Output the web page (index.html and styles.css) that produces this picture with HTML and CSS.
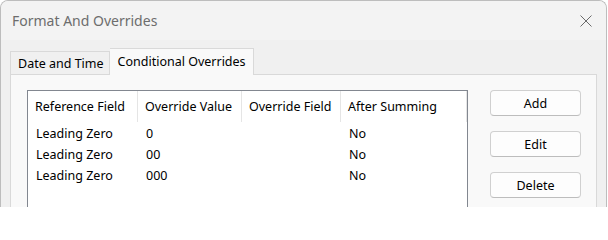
FILE: index.html
```html
<!DOCTYPE html>
<html>
<head>
<meta charset="utf-8">
<link rel="stylesheet" href="styles.css">
</head>
<body>
<div class="window">
  <div class="titlebar">
    <span class="title">Format And Overrides</span>
    <svg class="close" width="12" height="12" viewBox="0 0 12 12"><path d="M0.5 0.5 L11.5 11.5 M11.5 0.5 L0.5 11.5" stroke="#6a6a6a" stroke-width="1" fill="none"/></svg>
  </div>
  <div class="content">
    <div class="tabs">
      <div class="tab">Date and Time</div>
      <div class="tab active">Conditional Overrides</div>
    </div>
    <div class="panel">
      <div class="list">
        <div class="row header">
          <div class="cell c1">Reference Field</div>
          <div class="cell c2">Override Value</div>
          <div class="cell c3">Override Field</div>
          <div class="cell c4">After Summing</div>
        </div>
        <div class="row">
          <div class="cell c1">Leading Zero</div>
          <div class="cell c2">0</div>
          <div class="cell c3"></div>
          <div class="cell c4">No</div>
        </div>
        <div class="row">
          <div class="cell c1">Leading Zero</div>
          <div class="cell c2">00</div>
          <div class="cell c3"></div>
          <div class="cell c4">No</div>
        </div>
        <div class="row">
          <div class="cell c1">Leading Zero</div>
          <div class="cell c2">000</div>
          <div class="cell c3"></div>
          <div class="cell c4">No</div>
        </div>
      </div>
      <div class="buttons">
        <button class="btn">Add</button>
        <button class="btn">Edit</button>
        <button class="btn">Delete</button>
      </div>
    </div>
  </div>
</div>
</body>
</html>
```
FILE: styles.css
```css
* { box-sizing: border-box; }
html, body { margin: 0; padding: 0; background: #ffffff; }
body {
  width: 608px;
  height: 207px;
  overflow: hidden;
  font-family: "Noto Sans", "Open Sans", sans-serif;
  font-size: 12.5px;
  color: #000;
}
.window {
  width: 607px;
  height: 207px;
  border: 1px solid #bdbdbd;
  border-bottom: none;
  border-radius: 8px 8px 0 0;
  background: #f0f0f0;
  display: flex;
  flex-direction: column;
  overflow: hidden;
}
.titlebar {
  height: 39px;
  flex: none;
  display: flex;
  align-items: center;
  justify-content: space-between;
  padding: 0 14px 0 11px;
  background: #f3f3f3;
}
.title {
  font-size: 14px;
  color: #6d6d6d;
}
.close { display: block; }
.content {
  flex: 1;
  display: flex;
  flex-direction: column;
  padding: 0 9px 0 9px;
}
.tabs {
  height: 34px;
  flex: none;
  display: flex;
  align-items: flex-end;
}
.tab {
  height: 23px;
  padding: 0 5px 0 7px;
  display: flex;
  align-items: center;
  border: 1px solid #d9d9d9;
  border-bottom: none;
  background: #f0f0f0;
}
.tab.active {
  height: 27px;
  padding: 4px 7px 0 8px;
  background: #f9f9f9;
  border-left: none;
  margin-bottom: -1px;
  position: relative;
  align-items: flex-start;
}
.panel {
  flex: 1;
  display: flex;
  gap: 22px;
  border: 1px solid #d9d9d9;
  border-bottom: none;
  background: #f9f9f9;
  padding: 15px 15px 0 16px;
}
.list {
  width: 441px;
  flex: none;
  border: 1px solid #828790;
  border-bottom: none;
  background: #ffffff;
}
.row {
  display: flex;
  height: 21px;
  align-items: center;
}
.row.header {
  height: 31px;
  margin-bottom: 1px;
}
.cell {
  padding-left: 8px;
  white-space: nowrap;
  height: 100%;
  display: flex;
  align-items: center;
}
.header .cell { border-right: 1px solid #e5e5e5; padding-left: 7px; }
.c1 { width: 110px; }
.c2 { width: 104px; }
.c3 { width: 99px; }
.c4 { width: 126px; }
.buttons {
  display: flex;
  flex-direction: column;
  gap: 15px;
}
.btn {
  width: 91px;
  height: 26px;
  font-family: inherit;
  font-size: 12.5px;
  color: #000;
  background: #fdfdfd;
  border: 1px solid #d0d0d0;
  border-bottom-color: #bdbdbd;
  border-radius: 4px;
  padding: 0;
}
```
